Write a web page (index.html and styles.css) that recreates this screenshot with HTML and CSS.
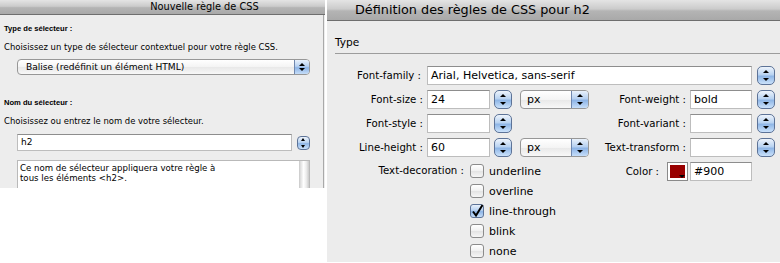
FILE: index.html
```html
<!DOCTYPE html>
<html lang="fr">
<head>
    <meta charset="UTF-8">
    <meta name="viewport" content="width=device-width, initial-scale=1.0">
    <title>Règles de CSS</title>
    <link rel="stylesheet" href="styles.css">
</head>
<body>
    <div class="screen">
        <!-- Nouvelle règle -->
        <section class="new-rule">
            <div class="titlebar">Nouvelle règle de CSS</div>
            <div class="new-rule-body">
                <p class="caption">Type de sélecteur :</p>
                <p class="hint">Choisissez un type de sélecteur contextuel pour votre règle CSS.</p>
                <div class="popup selector-type">
                    <span class="popup-label">Balise (redéfinit un élément HTML)</span>
                    <span class="popup-arrows"></span>
                </div>

                <p class="caption second">Nom du sélecteur :</p>
                <p class="hint">Choisissez ou entrez le nom de votre sélecteur.</p>
                <div class="name-row">
                    <div class="field name-field">h2</div>
                    <span class="stepper small"></span>
                </div>
                <div class="description">
                    <div class="description-text">Ce nom de sélecteur appliquera votre règle à<br>tous les éléments &lt;h2&gt;.</div>
                    <div class="scroll-track"></div>
                </div>
            </div>
        </section>

        <!-- Définition des règles -->
        <section class="rule-def">
            <div class="titlebar">Définition des règles de CSS pour h2</div>
            <div class="category">Type</div>

            <div class="type-grid">
                <label class="prop">Font-family :</label>
                <div class="field family-field">Arial, Helvetica, sans-serif</div>
                <span class="stepper last"></span>

                <label class="prop">Font-size :</label>
                <div class="field">24</div>
                <span class="stepper"></span>
                <div class="popup unit"><span class="popup-label">px</span><span class="popup-arrows"></span></div>
                <label class="prop">Font-weight :</label>
                <div class="field">bold</div>
                <span class="stepper last"></span>

                <label class="prop">Font-style :</label>
                <div class="field"></div>
                <span class="stepper"></span>
                <span></span>
                <label class="prop">Font-variant :</label>
                <div class="field"></div>
                <span class="stepper last"></span>

                <label class="prop">Line-height :</label>
                <div class="field">60</div>
                <span class="stepper"></span>
                <div class="popup unit"><span class="popup-label">px</span><span class="popup-arrows"></span></div>
                <label class="prop">Text-transform :</label>
                <div class="field"></div>
                <span class="stepper last"></span>
            </div>

            <div class="deco">
                <label class="prop deco-label">Text-decoration :</label>
                <div class="deco-list">
                    <div class="check-row"><span class="check"></span>underline</div>
                    <div class="check-row"><span class="check"></span>overline</div>
                    <div class="check-row"><span class="check checked"><svg width="14" height="14" viewBox="0 0 14 14"><path d="M3 7.5 L6 11.5 L12.5 1" fill="none" stroke="#000" stroke-width="2"/></svg></span>line-through</div>
                    <div class="check-row"><span class="check"></span>blink</div>
                    <div class="check-row"><span class="check"></span>none</div>
                </div>
                <div class="color-group">
                    <label class="prop">Color :</label>
                    <span class="swatch"><span class="swatch-fill"></span></span>
                    <div class="field color-field">#900</div>
                </div>
            </div>
        </section>
    </div>
</body>
</html>
```

FILE: styles.css
```css
* {
    box-sizing: border-box;
}
body {
    margin: 0;
    background: #ffffff;
    font-family: "DejaVu Sans", "Lucida Grande", sans-serif;
    color: #000000;
}
p {
    margin: 0;
}
.screen {
    display: flex;
    gap: 2px;
    height: 263px;
    align-items: flex-start;
}
.titlebar {
    background: linear-gradient(#e4e4e4, #cbcbcb 45%, #b4b4b4 55%, #a9a9a9);
    border-bottom: 1px solid #6e6e6e;
    color: #000000;
    white-space: nowrap;
}

/* left dialog */
.new-rule {
    width: 325px;
    height: 188px;
    background: #ededed;
    overflow: hidden;
}
.new-rule .titlebar {
    height: 15px;
    font-size: 9.8px;
    line-height: 14px;
    text-align: center;
    padding-left: 84px;
}
.new-rule-body {
    height: 173px;
    padding-left: 4px;
    margin-right: 1px;
    border-right: 1px solid #a9a9a9;
}
.caption {
    font-family: "Liberation Sans", Arial, sans-serif;
    font-size: 7.6px;
    font-weight: bold;
    line-height: 12px;
    padding-top: 8px;
}
.caption.second {
    padding-top: 22px;
}
.hint {
    font-size: 8.45px;
    line-height: 12px;
    margin-top: 6px;
}
.popup {
    display: flex;
    align-items: center;
    border: 1px solid #979797;
    border-radius: 4px;
    background: linear-gradient(#ffffff, #f4f4f4 50%, #e8e8e8 51%, #f8f8f8);
    overflow: hidden;
}
.popup-label {
    flex: 1;
    padding-left: 6px;
    white-space: nowrap;
}
.popup-arrows {
    position: relative;
    width: 17px;
    align-self: stretch;
    border-left: 1px solid #6f87ae;
    background: linear-gradient(#e9f1fb, #b6d0f0 45%, #8db4e6 55%, #c6def9);
}
.popup-arrows::before,
.popup-arrows::after,
.stepper::before,
.stepper::after {
    content: "";
    position: absolute;
    left: 50%;
    margin-left: -3px;
    border-left: 3px solid transparent;
    border-right: 3px solid transparent;
}
.popup-arrows::before,
.stepper::before {
    top: 3px;
    border-bottom: 3px solid #000000;
}
.popup-arrows::after,
.stepper::after {
    bottom: 3px;
    border-top: 3px solid #000000;
}
.selector-type {
    margin: 6px 0 0 13px;
    width: 293px;
    height: 16px;
    font-size: 9.1px;
}
.selector-type .popup-label {
    padding-left: 8px;
}
.selector-type .popup-arrows {
    width: 15px;
}
.field {
    height: 19px;
    background: #ffffff;
    border: 1px solid #bdbdbd;
    border-top-color: #8d8d8d;
    padding: 1px 3px;
    font-size: 11px;
    line-height: 15px;
    white-space: nowrap;
    overflow: hidden;
}
.name-row {
    display: flex;
    align-items: center;
    gap: 5px;
    margin: 7px 0 0 13px;
}
.name-field {
    width: 275px;
    height: 17px;
    font-size: 9px;
    line-height: 13px;
}
.stepper {
    position: relative;
    display: block;
    width: 18px;
    height: 19px;
    border: 1px solid #5d7397;
    border-radius: 5px;
    background: linear-gradient(#eef4fc, #b9d3f1 45%, #8fb6e6 55%, #cbe2fb);
}
.stepper.small {
    width: 13px;
    height: 14px;
    border-radius: 4px;
}
.stepper.small::before {
    top: 1px;
    border-width: 0 2.5px 3px;
    margin-left: -2.5px;
}
.stepper.small::after {
    bottom: 1px;
    border-width: 3px 2.5px 0;
    margin-left: -2.5px;
}
.description {
    display: flex;
    margin: 9px 0 0 13px;
    width: 293px;
    height: 40px;
    background: #ffffff;
    border: 1px solid #b9b9b9;
}
.description-text {
    flex: 1;
    font-size: 8.6px;
    line-height: 10px;
    padding: 2px 2px;
}
.scroll-track {
    width: 10px;
    background: linear-gradient(90deg, #d9d9d9, #ffffff 40%, #ececec 70%, #c9c9c9);
    border-left: 1px solid #cfcfcf;
}

/* right panel */
.rule-def {
    flex: 1;
    height: 262px;
    background: #ececec;
}
.rule-def .titlebar {
    height: 21px;
    font-size: 12.8px;
    line-height: 20px;
    padding-left: 28px;
}
.category {
    margin-left: 8px;
    padding: 14px 0 4px 0;
    font-size: 10.6px;
    line-height: 14px;
    border-bottom: 1px solid #9c9c9c;
}
.type-grid {
    display: grid;
    grid-template-columns: 100px 63px 30px 69px 101px 62px 1fr;
    grid-auto-rows: 24px;
    align-items: center;
    margin-top: 9px;
}
.prop {
    font-size: 10.2px;
    text-align: right;
    white-space: nowrap;
}
.type-grid .prop {
    padding-right: 6px;
}
.type-grid .prop:nth-child(n+4) {
    padding-right: 4px;
}
.type-grid .stepper {
    margin-left: 4px;
}
.type-grid .stepper.last {
    margin-left: 5px;
}
.family-field {
    grid-column: 2 / 7;
}
.unit {
    height: 19px;
    font-size: 11px;
}
.deco {
    display: flex;
    align-items: flex-start;
    margin-top: 2px;
}
.deco-label {
    width: 139px;
    padding-right: 2px;
    line-height: 20px;
}
.deco-list {
    padding-left: 4px;
}
.check-row {
    display: flex;
    align-items: center;
    gap: 5px;
    height: 20px;
    font-size: 11px;
}
.check {
    width: 14px;
    height: 14px;
    border: 1px solid #8b8b8b;
    border-radius: 3px;
    background: linear-gradient(#ffffff, #f0f0f0 50%, #e3e3e3 51%, #f6f6f6);
}
.check.checked {
    border-color: #5d7397;
    background: linear-gradient(#e9f1fb, #b6d0f0 45%, #8db4e6 55%, #c6def9);
}
.check svg {
    display: block;
    margin: -1px 0 0 -1px;
}
.color-group {
    display: flex;
    align-items: center;
    height: 20px;
    margin-left: auto;
    margin-right: 28px;
}
.color-group .prop {
    margin-right: 8px;
}
.swatch {
    position: relative;
    width: 21px;
    height: 19px;
    padding: 2px;
    margin-right: 2px;
    border: 1px solid #8a8a8a;
    background: #ffffff;
}
.swatch-fill {
    display: block;
    height: 100%;
    background: #990000;
}
.swatch::after {
    content: "";
    position: absolute;
    right: 2px;
    bottom: 2px;
    border-left: 3px solid transparent;
    border-right: 3px solid transparent;
    border-top: 3px solid #000000;
}
.color-field {
    width: 62px;
}
```
